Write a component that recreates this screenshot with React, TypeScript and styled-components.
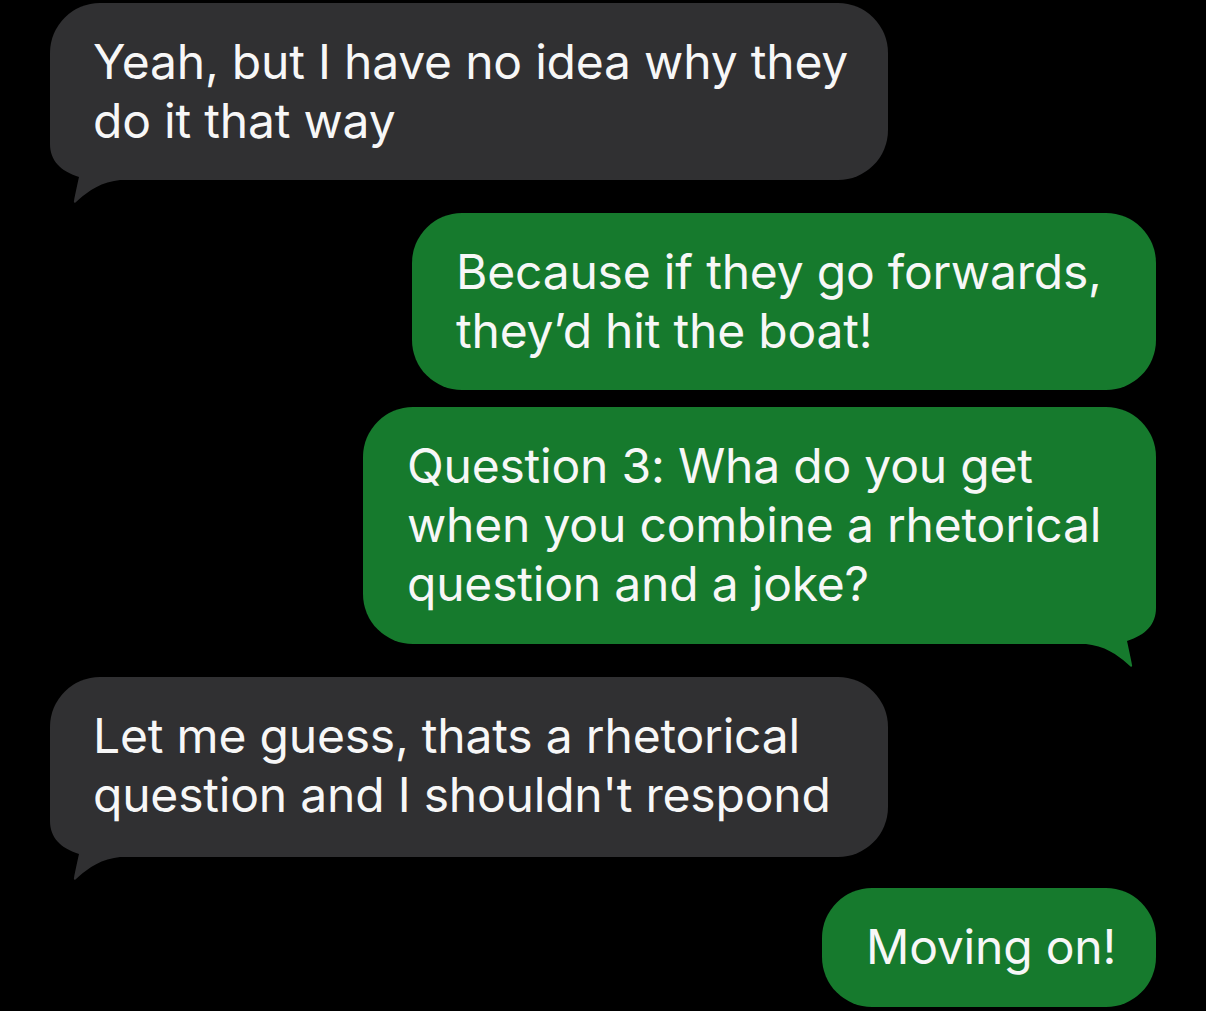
import React from "react";
import styled, { createGlobalStyle } from "styled-components";

const GlobalStyle = createGlobalStyle`
  html, body {
    margin: 0;
    padding: 0;
    background: #000;
  }
  body {
    font-family: Inter, "Noto Sans", "Liberation Sans", sans-serif;
    -webkit-font-smoothing: antialiased;
  }
`;

const Thread = styled.div`
  width: 1206px;
  height: 1011px;
  box-sizing: border-box;
  padding: 3px 50px 0 50px;
  display: flex;
  flex-direction: column;
  overflow: hidden;
  background: #000;
`;

type Side = "in" | "out";

const Bubble = styled.div<{ $side: Side; $width: number; $gap: number; $padBottom: number }>`
  position: relative;
  align-self: ${(p) => (p.$side === "in" ? "flex-start" : "flex-end")};
  width: ${(p) => p.$width}px;
  box-sizing: border-box;
  margin-top: ${(p) => p.$gap}px;
  padding: 29px 0 ${(p) => p.$padBottom}px ${(p) => (p.$side === "in" ? 43 : 44)}px;
  border-radius: 50px;
  background: ${(p) => (p.$side === "in" ? "#303032" : "#167a2d")};
  color: #f7f7f7;
  font-size: 48px;
  line-height: 59px;
  letter-spacing: -0.2px;
  white-space: pre;
`;

const Line = styled.div`
  position: relative;
  z-index: 1;
`;

const Tail = styled.svg<{ $side: Side; $color: string }>`
  position: absolute;
  bottom: -24px;
  ${(p) => (p.$side === "in" ? "left: 0;" : "right: 0;")}
  width: 70px;
  height: 80px;
  transform: ${(p) => (p.$side === "in" ? "scaleX(-1)" : "none")};
  fill: ${(p) => p.$color};
  z-index: 0;
`;

const TailShape = ({ side }: { side: Side }) => (
  <Tail
    $side={side}
    $color={side === "in" ? "#303032" : "#167a2d"}
    viewBox="0 0 70 80"
  >
    <path d="M0,0 H70 V20 C70,36 60,47 41,53 C43,62 45,71 46,77 C46.5,78.5 45.5,79 44.5,78.4 C36,71 24,60 6,57 C4,56.6 2,56.3 0,56 Z" />
  </Tail>
);

type Msg = {
  side: Side;
  width: number;
  gap: number;
  padBottom: number;
  lines: string[];
  tail?: boolean;
};

const messages: Msg[] = [
  {
    side: "in",
    width: 838,
    gap: 0,
    padBottom: 30,
    lines: ["Yeah, but I have no idea why they", "do it that way"],
    tail: true,
  },
  {
    side: "out",
    width: 744,
    gap: 33,
    padBottom: 30,
    lines: ["Because if they go forwards,", "they\u2019d hit the boat!"],
  },
  {
    side: "out",
    width: 793,
    gap: 17,
    padBottom: 31,
    lines: ["Question 3: Wha do you get", "when you combine a rhetorical", "question and a joke?"],
    tail: true,
  },
  {
    side: "in",
    width: 838,
    gap: 33,
    padBottom: 33,
    lines: ["Let me guess, thats a rhetorical", "question and I shouldn't respond"],
    tail: true,
  },
  {
    side: "out",
    width: 334,
    gap: 31,
    padBottom: 31,
    lines: ["Moving on!"],
  },
];

export default function App() {
  return (
    <>
      <GlobalStyle />
      <Thread>
        {messages.map((m, i) => (
          <Bubble
            key={i}
            $side={m.side}
            $width={m.width}
            $gap={m.gap}
            $padBottom={m.padBottom}
          >
            {m.tail && <TailShape side={m.side} />}
            {m.lines.map((l, j) => (
              <Line key={j}>{l}</Line>
            ))}
          </Bubble>
        ))}
      </Thread>
    </>
  );
}
